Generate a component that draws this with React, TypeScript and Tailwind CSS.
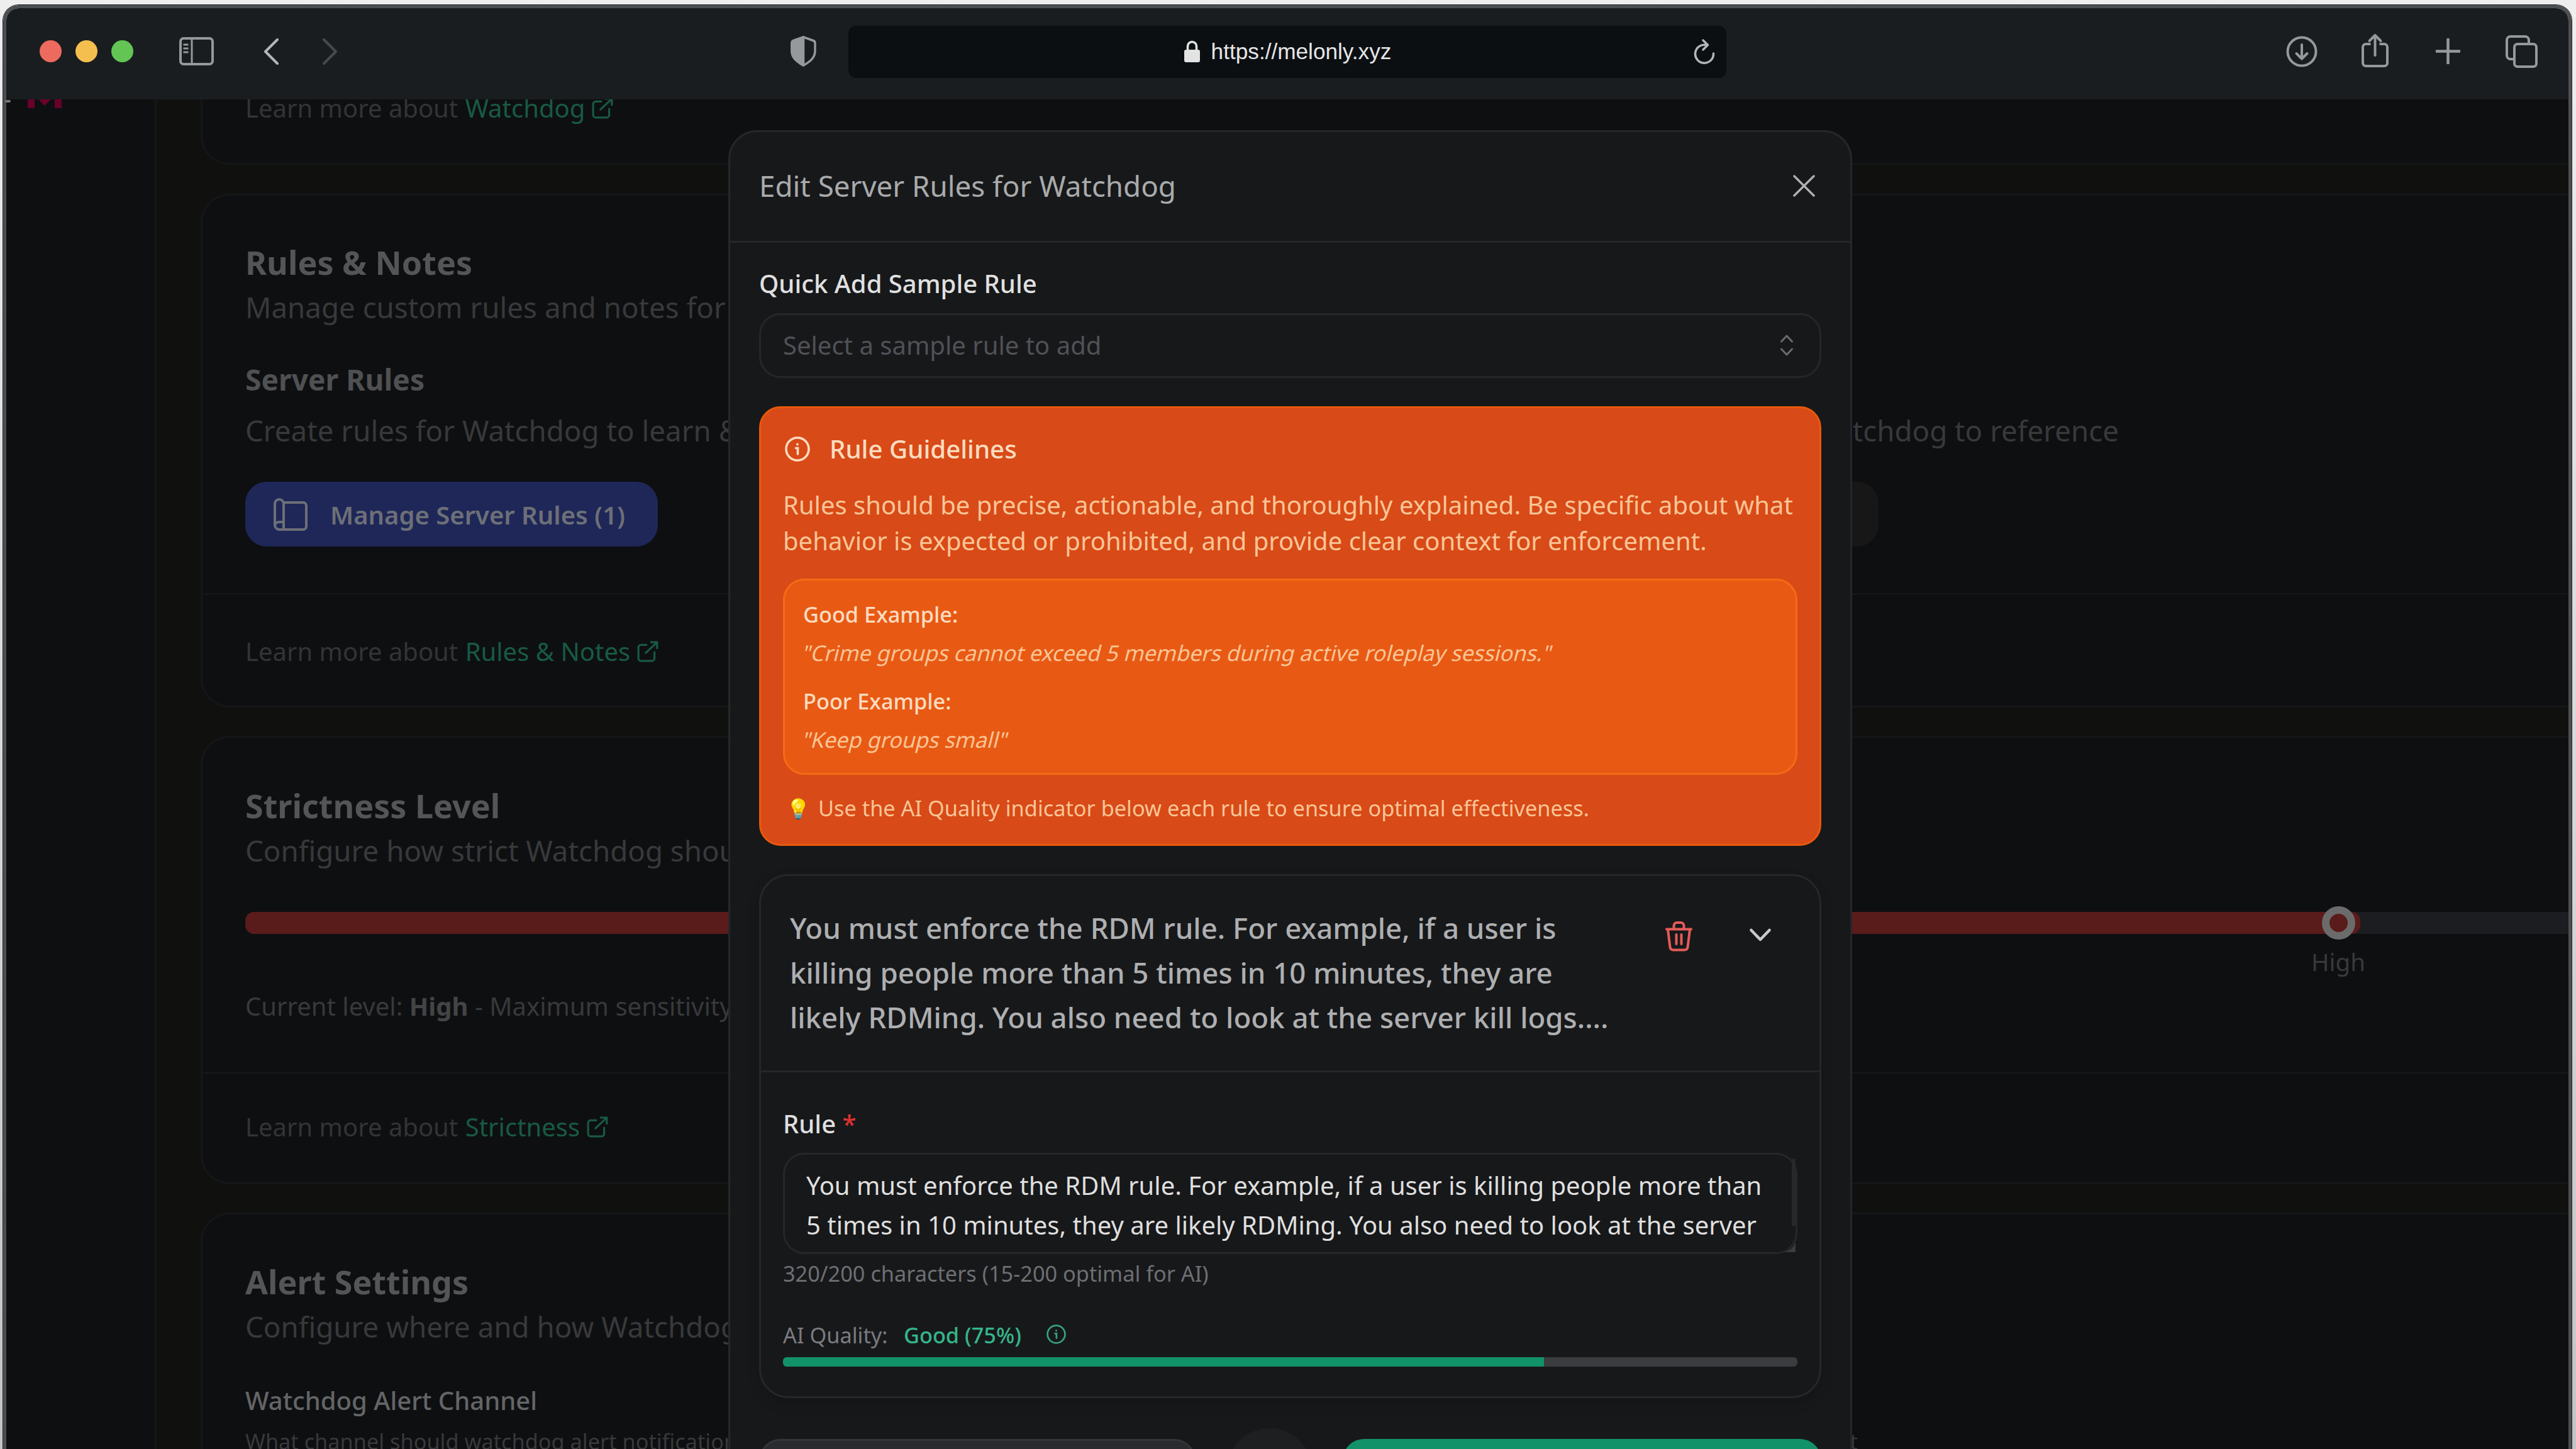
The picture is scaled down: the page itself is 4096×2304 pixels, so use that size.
import type { ReactNode } from "react";

const OpenIcon = () => (
  <svg className="ml-[11px] h-[34px] w-[34px]" viewBox="0 0 32 32" fill="none" stroke="currentColor" strokeWidth="3" strokeLinecap="round" strokeLinejoin="round">
    <path d="M14 6H6a4 4 0 0 0-4 4v16a4 4 0 0 0 4 4h16a4 4 0 0 0 4-4v-9" />
    <path d="M13 18 30 2M21 2h9v9" />
  </svg>
);

const InfoIcon = ({ className }: { className: string }) => (
  <svg className={className} viewBox="0 0 40 40" fill="none" stroke="currentColor" strokeWidth="3.6" strokeLinecap="round">
    <circle cx="20" cy="20" r="18" />
    <path d="M17.5 18.5H20.5V28M20 12.4v.4" />
  </svg>
);

function LearnMore({ label, className }: { label: string; className?: string }) {
  return (
    <div className={`flex items-center text-[40px] leading-[57px] text-[#333436] ${className ?? ""}`}>
      <span>Learn more about&nbsp;</span>
      <span className="ml-px text-[#185a43]">{label}</span>
      <span className="text-[#185a43]">
        <OpenIcon />
      </span>
    </div>
  );
}

function Card({ children, className }: { children: ReactNode; className?: string }) {
  return (
    <div className={`ml-[70px] border-y-[3px] border-l-[3px] border-[#151617] bg-[#0e0f11] ${className ?? ""}`}>
      {children}
    </div>
  );
}

function CardTitle({ title, text }: { title: string; text: string }) {
  return (
    <>
      <div className="text-[52px] leading-[72px] font-bold text-[#545556]">{title}</div>
      <div className="text-[45.7px] leading-[71px] text-[#38393b]">{text}</div>
    </>
  );
}

function Toolbar() {
  return (
    <div className="flex h-[145px] shrink-0 items-center bg-[#1a1d1f] pb-[8px] pl-[53px] text-[#96999b]">
      <div className="flex gap-[22px]">
        <div className="h-[35px] w-[35px] rounded-full bg-[#ed6a5e]" />
        <div className="h-[35px] w-[35px] rounded-full bg-[#f5bf4f]" />
        <div className="h-[35px] w-[35px] rounded-full bg-[#62c554]" />
      </div>
      <svg className="ml-[73px] h-[45px] w-[55px]" viewBox="0 0 55 45" fill="none" stroke="currentColor" strokeWidth="4">
        <rect x="2" y="2" width="51" height="41" rx="5" />
        <path d="M20 2v41M6.500 12h8M6.500 18h8M6.500 24h8" strokeWidth="3" />
      </svg>
      <svg className="ml-[79px] h-[42px] w-[24px]" viewBox="0 0 24 42" fill="none" stroke="#b4b6b8" strokeWidth="4" strokeLinecap="round" strokeLinejoin="round">
        <path d="M22 2 3 21l19 19" />
      </svg>
      <svg className="ml-[70px] h-[42px] w-[24px]" viewBox="0 0 24 42" fill="none" stroke="#464a4c" strokeWidth="4" strokeLinecap="round" strokeLinejoin="round">
        <path d="m2 2 19 19L2 40" />
      </svg>
      <svg className="ml-[720px] h-[49px] w-[41px]" viewBox="0 0 41 49" fill="none" stroke="currentColor" strokeWidth="3.500" strokeLinejoin="round">
        <path d="M20.500 2 36 7.500q3 1 3 4V24c0 11-8 17-18.500 23C10 41 2 35 2 24V11.500q0-3 3-4z" />
        <path d="M20.500 2v45C10 41 2 35 2 24V11.500q0-3 3-4z" fill="currentColor" />
      </svg>
      <div className="mt-px ml-[51px] flex h-[83px] w-[1396px] items-center justify-between rounded-[12px] bg-[#0b0f12] pr-[17px] pl-[17px]">
        <div className="w-[36px]" />
        <div className="flex items-center gap-[17px]">
          <svg className="h-[36px] w-[27px] text-[#e3e3e3]" viewBox="0 0 27 36" fill="none" stroke="currentColor">
            <path d="M6.500 16V9.500a7 7 0 0 1 14 0V16" strokeWidth="3.500" />
            <rect x="1" y="15" width="25" height="20" rx="3" fill="currentColor" stroke="none" />
          </svg>
          <span className="font-['Liberation_Sans',sans-serif] text-[35.200px] leading-[48px] text-[#e6e6e6]">https://melonly.xyz</span>
        </div>
        <svg className="h-[40px] w-[36px]" viewBox="0 0 36 40" fill="none" stroke="#b4b6b8" strokeWidth="3.500" strokeLinecap="round" strokeLinejoin="round">
          <path d="M21 9.500A14.500 14.500 0 1 0 32.500 23M16 2l7.500 7.500L16 17" />
        </svg>
      </div>
      <svg className="ml-[890px] h-[50px] w-[50px]" viewBox="0 0 50 50" fill="none" stroke="currentColor" strokeWidth="4" strokeLinecap="round" strokeLinejoin="round">
        <circle cx="25" cy="25" r="22.500" />
        <path d="M25 14v22M16.500 28l8.500 8.500 8.500-8.500" />
      </svg>
      <svg className="mb-[3px] ml-[70px] h-[55px] w-[43px]" viewBox="0 0 43 55" fill="none" stroke="currentColor" strokeWidth="4" strokeLinejoin="round">
        <path d="M14.500 17H7a5 5 0 0 0-5 5v25a5 5 0 0 0 5 5h29a5 5 0 0 0 5-5V22a5 5 0 0 0-5-5h-7.500" />
        <path d="M21.500 3v32M12.500 12l9-9 9 9" strokeLinecap="round" />
      </svg>
      <svg className="ml-[75px] h-[41px] w-[39px]" viewBox="0 0 39 41" fill="none" stroke="currentColor" strokeWidth="4.500">
        <path d="M19.500 0v41M0 20.500h39" />
      </svg>
      <svg className="ml-[72px] h-[52px] w-[51px]" viewBox="0 0 51 52" fill="none" stroke="currentColor" strokeWidth="4">
        <rect x="14" y="14" width="35" height="36" rx="5" />
        <path d="M14 38H8a6 6 0 0 1-6-6V8a6 6 0 0 1 6-6h23a6 6 0 0 1 6 6v6" />
      </svg>
    </div>
  );
}

function SettingsPage() {
  return (
    <div className="flex h-[2146px] overflow-hidden whitespace-nowrap">
      <aside className="w-[239px] shrink-0 border-r-[3px] border-[#151617] bg-[#0e0f11]">
        <svg className="ml-[34px] h-[14px] w-[54px]" viewBox="0 0 54 14" fill="#69002b">
          <path d="M0 0h11v14H0zM43 0h11v14H43zM17 0h20L27 10z" />
        </svg>
      </aside>
      <main className="w-[3835px] shrink-0 bg-[#10100f]">
        <Card className="h-[104px] rounded-bl-[46px] border-t-0 pl-[68px]">
          <LearnMore label="Watchdog" className="relative -top-[15px]" />
        </Card>

        <Card className="mt-[46px] h-[817px] rounded-l-[46px] pt-[70px]">
          <div className="pl-[68px]">
            <CardTitle title="Rules & Notes" text="Manage custom rules and notes for Watchdog" />
            <div className="mt-[45px] flex">
              <div className="w-[1847px] shrink-0">
                <div className="text-[46.2px] leading-[69px] font-bold text-[#4f5052]">Server Rules</div>
                <div className="mt-[11px] w-[775px] overflow-hidden text-[45.7px] leading-[71px] text-[#38393b]">Create rules for Watchdog to learn &amp; enforce</div>
                <div className="mt-[46px] flex h-[103px] w-[656px] items-center rounded-[34px] bg-[#1e2757] pl-[45px] text-[#6d6f78]">
                  <svg className="h-[52px] w-[54px]" viewBox="0 0 54 52" fill="none" stroke="currentColor" strokeWidth="4" strokeLinejoin="round">
                    <path d="M16 7h31a5 5 0 0 1 5 5v33a5 5 0 0 1-5 5H9a7 7 0 0 1-7-7V9a7 7 0 0 1 14 0v31M2 44a7 7 0 0 1 7-6h7v12" />
                  </svg>
                  <span className="mt-[2px] ml-[36px] text-[40px] font-semibold">Manage Server Rules (1)</span>
                </div>
              </div>
              <div className="w-[1132px] shrink-0">
                <div className="mt-[80px] text-right text-[45.7px] leading-[71px] text-[#38393b]">Create notes for Watchdog to reference</div>
                <div className="mt-[46px] h-[103px] w-[750px] rounded-[34px] bg-[#161716]" />
              </div>
            </div>
          </div>
          <div className="mt-[74px] border-t-[3px] border-[#151617] pt-[61px] pl-[68px]">
            <LearnMore label="Rules & Notes" />
          </div>
        </Card>

        <Card className="mt-[45px] h-[713px] rounded-l-[46px] pt-[72px]">
          <div className="pl-[68px]">
            <CardTitle title="Strictness Level" text="Configure how strict Watchdog should be" />
            <div className="relative mt-[62px] h-[35px] rounded-l-[14px] bg-[#1c1d20]">
              <div className="h-[35px] w-[3363px] rounded-[14px] bg-[#5a1b1b]" />
              <div className="absolute -top-[9px] left-[3302px] h-[53px] w-[53px] rounded-full border-[12px] border-[#6b6b6b] bg-[#5a1b1b]" />
            </div>
            <div className="mt-[16px] pl-[3285px] text-[38.500px] leading-[57px] text-[#38393b]">High</div>
            <div className="mt-[13px] text-[40px] leading-[57px] text-[#38393b]">
              Current level: <b className="text-[#434446]">High</b> - Maximum sensitivity
            </div>
          </div>
          <div className="mt-[76px] border-t-[3px] border-[#151617] pt-[56px] pl-[68px]">
            <LearnMore label="Strictness" />
          </div>
        </Card>

        <Card className="mt-[45px] h-[713px] rounded-l-[46px] pt-[71px] pl-[68px]">
          <CardTitle title="Alert Settings" text="Configure where and how Watchdog alerts you" />
          <div className="mt-[53px] text-[40px] leading-[57px] font-medium text-[#646567]">Watchdog Alert Channel</div>
          <div className="mt-[11px] flex w-[2564px] justify-between text-[34.3px] leading-[52px] text-[#38393b]">
            <span>What channel should watchdog alert notifications</span>
            <span>be sent</span>
          </div>
        </Card>
      </main>
    </div>
  );
}

// slanted upright glyphs, the italic cut runs too narrow
const Quote = ({ children, className }: { children: ReactNode; className: string }) => (
  <div className={`${className} w-fit -skew-x-[14deg]`}>{children}</div>
);

function RuleGuidelines() {
  return (
    <div className="mt-[45px] h-[699px] rounded-[34px] border-[3px] border-[#e8590c] bg-[#d84a17] px-[35px] pt-[36px] text-[#fbc596]">
      <div className="flex items-center text-[40.2px] leading-[57px] font-medium text-[#fddcc0]">
        <InfoIcon className="ml-[3px] h-[40px] w-[40px]" />
        <span className="ml-[31px]">Rule Guidelines</span>
      </div>
      <div className="mt-[32px] text-[40px] leading-[57px]">
        Rules should be precise, actionable, and thoroughly explained. Be specific about what
        <br />
        behavior is expected or prohibited, and provide clear context for enforcement.
      </div>
      <div className="mt-[32px] h-[312px] rounded-[34px] border-[3px] border-[#f56b15] bg-[#e85a14] px-[29px] pt-[31px] text-[34.3px] leading-[46px]">
        <div className="font-medium text-[#fddcc0]">Good Example:</div>
        <Quote className="mt-[15px]">"Crime groups cannot exceed 5 members during active roleplay sessions."</Quote>
        <div className="mt-[31px] font-medium text-[#fddcc0]">Poor Example:</div>
        <Quote className="mt-[15px]">"Keep groups small"</Quote>
      </div>
      <div className="mt-[30px] flex text-[34.3px] leading-[46px]">
        <span className="w-[56px] pl-[5px] text-[31px]">💡</span>
        <span>Use the AI Quality indicator below each rule to ensure optimal effectiveness.</span>
      </div>
    </div>
  );
}

function RuleCard() {
  return (
    <div className="mt-[45px] h-[833px] rounded-[46px] border-[3px] border-[#26272a] bg-[#17181a] shadow-[0_8px_20px_rgba(0,0,0,0.15)]">
      <div className="flex h-[312px] items-start border-b-[3px] border-[#26272a] pt-[47px] pl-[46px]">
        <div className="w-[1391px] text-[45.6px] leading-[71px] font-medium text-[#aeafb1]">
          You must enforce the RDM rule. For example, if a user is
          <br />
          killing people more than 5 times in 10 minutes, they are
          <br />
          likely RDMing. You also need to look at the server kill logs....
        </div>
        <svg className="mt-[24px] ml-px h-[49px] w-[43px]" viewBox="0 0 43 49" fill="none" stroke="#e55b59" strokeWidth="4" strokeLinecap="round" strokeLinejoin="round">
          <path d="M2 13.500h39M4 14l3.500 28a5 5 0 0 0 5 4.500h18a5 5 0 0 0 5-4.500L39 14M13.500 13V8a5 5 0 0 1 5-5h6a5 5 0 0 1 5 5v5M17.500 22v15M25.500 22v15" />
        </svg>
        <svg className="mt-[36px] ml-[91px] h-[22px] w-[34px]" viewBox="0 0 34 22" fill="none" stroke="#c9cacd" strokeWidth="4.500" strokeLinecap="round" strokeLinejoin="round">
          <path d="m2.500 3 14.500 15L31.500 3" />
        </svg>
      </div>
      <div className="px-[35px] pt-[53px]">
        <div className="text-[40px] leading-[57px] font-medium text-[#dfdfdf]">
          Rule <span className="text-[#e03131]">*</span>
        </div>
        <div className="relative mt-[18px] h-[161px] rounded-[34px] border-[3px] border-[#26272a] pt-[17px] pl-[34px] text-[40px] leading-[63px] text-[#dfdfdf]">
          You must enforce the RDM rule. For example, if a user is killing people more than
          <br />
          5 times in 10 minutes, they are likely RDMing. You also need to look at the server
          <div className="absolute top-[6px] right-0 h-[108px] w-[6px] rounded-full bg-[#26282c]" />
          <svg className="absolute right-0 bottom-0 h-[18px] w-[18px]" viewBox="0 0 18 18" fill="#3a3c40">
            <path d="M18 2v16H0Q14 14 18 2z" />
          </svg>
        </div>
        <div className="mt-[8px] text-[34.3px] leading-[46px] text-[#6d6f73]">320/200 characters (15-200 optimal for AI)</div>
        <div className="mt-[52px] flex items-center text-[34.3px] leading-[46px] text-[#7a7c80]">
          <span className="w-[192px]">AI Quality:</span>
          <span className="font-medium text-[#35b58a]">Good (75%)</span>
          <InfoIcon className="mb-[3px] ml-[40px] h-[31px] w-[31px] text-[#35a07c]" />
        </div>
        <div className="mt-[12px] h-[15px] overflow-hidden rounded-[6px] bg-[#3a3c40]">
          <div className="h-full w-3/4 bg-[#129268]" />
        </div>
      </div>
    </div>
  );
}

function RulesModal() {
  return (
    <div className="absolute top-[207px] left-[1158px] h-[2140px] w-[1787px] rounded-t-[46px] border-[3px] border-[#26272a] bg-[#17181a] whitespace-nowrap">
      <div className="flex h-[176px] items-center justify-between border-b-[3px] border-[#26272a] pr-[56px] pb-[2px] pl-[46px]">
        <span className="text-[45.7px] leading-[69px] text-[#a9aaac]">Edit Server Rules for Watchdog</span>
        <svg className="h-[35px] w-[35px]" viewBox="0 0 36 36" fill="none" stroke="#b0b1b3" strokeWidth="3.500" strokeLinecap="round">
          <path d="m2 2 32 32M34 2 2 34" />
        </svg>
      </div>
      <div className="px-[46px] pt-[36px]">
        <div className="text-[40px] leading-[57px] font-medium text-[#e0e0e0]">Quick Add Sample Rule</div>
        <div className="mt-[19px] flex h-[103px] items-center justify-between rounded-[34px] border-[3px] border-[#26272a] pr-[41px] pb-[2px] pl-[35px] text-[40px] text-[#505156]">
          <span>Select a sample rule to add</span>
          <svg className="h-[34px] w-[22px]" viewBox="0 0 22 34" fill="none" stroke="#6a6b6f" strokeWidth="3" strokeLinecap="round" strokeLinejoin="round">
            <path d="m2.500 11 8.500-9 8.500 9M2.500 23l8.500 9 8.500-9" />
          </svg>
        </div>
        <RuleGuidelines />
        <RuleCard />
        <div className="mt-[65px] flex items-center justify-between">
          <div className="h-[103px] w-[694px] rounded-[34px] border-[3px] border-[#34353a] bg-[#2a2b2f]" />
          <div className="-my-[30px] h-[137px] w-[137px] rounded-full bg-[#1e1f21]" />
          <div className="h-[103px] w-[761px] rounded-[34px] bg-[#129268]" />
        </div>
      </div>
    </div>
  );
}

export default function App() {
  return (
    <div className="relative h-[2304px] w-[4096px] overflow-hidden bg-linear-to-b from-[#eeeeee] to-[#c4c4c4] pt-[8px] pr-[7px] pl-[5px] font-['Noto_Sans',sans-serif]">
      <div className="h-[2400px] overflow-hidden rounded-t-[25px] border-x-[5px] border-t-[5px] border-[#4c4f51] shadow-[0_0_0_1px_#222]">
        <Toolbar />
        <SettingsPage />
      </div>
      <div className="absolute top-[159px] left-[8px] h-[4px] w-[9px] rounded-full bg-[#77797a]" />
      <RulesModal />
    </div>
  );
}
